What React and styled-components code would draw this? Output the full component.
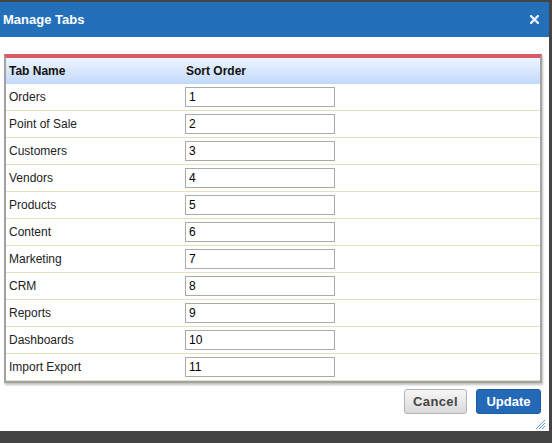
import styled, { createGlobalStyle } from 'styled-components'

const GlobalStyle = createGlobalStyle`
  html, body {
    margin: 0;
    padding: 0;
    background: #444444;
  }
  body {
    font-family: "Liberation Sans", Arial, sans-serif;
    font-size: 12px;
  }
`

const Dialog = styled.div`
  width: 549px;
  height: 429px;
  margin-top: 2px;
  background: #ffffff;
  display: flex;
  flex-direction: column;
  position: relative;
`

const TitleBar = styled.div`
  height: 35px;
  background: #236fba;
  display: flex;
  align-items: center;
  justify-content: space-between;
  padding: 0 10px 0 3px;
`

const Title = styled.span`
  color: #ffffff;
  font-weight: bold;
  font-size: 13px;
`

const CloseButton = styled.button`
  border: 0;
  background: transparent;
  padding: 0;
  width: 9px;
  height: 9px;
  display: flex;
  cursor: pointer;
`

const Content = styled.div`
  flex: 1;
  padding: 17px 7px 0 4px;
  display: flex;
  flex-direction: column;
`

const TableBox = styled.div`
  border: 2px solid #a3a3a3;
  border-top: 4px solid #d95b63;
  box-shadow: 1px 2px 2px rgba(0, 0, 0, 0.25);
`

const Row = styled.div`
  display: grid;
  grid-template-columns: 179px 1fr;
  align-items: center;
  height: 26px;
  border-bottom: ${p => (p.$head ? 'none' : '1px solid #e3dfbf')};
  background: ${p => (p.$head ? 'linear-gradient(#edf4ff, #c3d9fa)' : '#ffffff')};
  color: ${p => (p.$head ? '#111111' : '#222222')};
  font-weight: ${p => (p.$head ? 'bold' : 'normal')};
`

const NameCell = styled.div`
  padding-left: 3px;
`

const OrderCell = styled.div`
  padding-left: ${p => (p.$head ? '1px' : '0')};
`

const OrderInput = styled.input`
  box-sizing: border-box;
  width: 150px;
  height: 20px;
  border: 1px solid #aaaaaa;
  padding: 0 3px;
  font-family: "Liberation Sans", Arial, sans-serif;
  font-size: 12px;
  color: #000000;
  outline: none;
`

const Footer = styled.div`
  display: flex;
  justify-content: flex-end;
  gap: 9px;
  padding: 6px 1px 0 0;
`

const Button = styled.button`
  height: 25px;
  width: ${p => (p.$primary ? '65px' : '63px')};
  border-radius: 3px;
  font-family: "Liberation Sans", Arial, sans-serif;
  font-weight: bold;
  font-size: 13px;
  letter-spacing: ${p => (p.$primary ? '0' : '0.4px')};
  cursor: pointer;
  border: 1px solid ${p => (p.$primary ? '#1b5a9f' : '#b3b3b3')};
  background: ${p => (p.$primary ? '#2369b8' : 'linear-gradient(#f6f6f6, #dadada)')};
  color: ${p => (p.$primary ? '#ffffff' : '#444444')};
`

const Grip = styled.svg`
  position: absolute;
  right: 3px;
  bottom: 1px;
`

const tabs = [
  'Orders',
  'Point of Sale',
  'Customers',
  'Vendors',
  'Products',
  'Content',
  'Marketing',
  'CRM',
  'Reports',
  'Dashboards',
  'Import Export',
]

export default function App() {
  return (
    <>
      <GlobalStyle />
      <Dialog>
        <TitleBar>
          <Title>Manage Tabs</Title>
          <CloseButton aria-label="Close">
            <svg width="9" height="9" viewBox="0 0 9 9">
              <path d="M1 1 L8 8 M8 1 L1 8" stroke="#e6edf7" strokeWidth="2.4" strokeLinecap="square" />
            </svg>
          </CloseButton>
        </TitleBar>
        <Content>
          <TableBox>
            <Row $head>
              <NameCell>Tab Name</NameCell>
              <OrderCell $head>Sort Order</OrderCell>
            </Row>
            {tabs.map((name, i) => (
              <Row key={name}>
                <NameCell>{name}</NameCell>
                <OrderCell>
                  <OrderInput defaultValue={i + 1} />
                </OrderCell>
              </Row>
            ))}
          </TableBox>
          <Footer>
            <Button>Cancel</Button>
            <Button $primary>Update</Button>
          </Footer>
        </Content>
        <Grip width="11" height="11" viewBox="0 0 11 11">
          <path d="M1 10 L10 1 M4 10 L10 4 M7 10 L10 7" stroke="#5b9be2" strokeWidth="1" />
        </Grip>
      </Dialog>
    </>
  )
}
